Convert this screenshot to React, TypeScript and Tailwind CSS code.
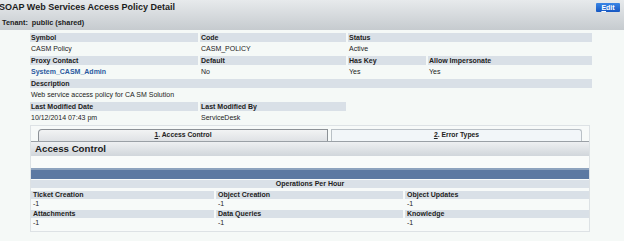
import React, { type FC } from 'react';

type Field = {
  readonly label: string;
  readonly value: string;
  readonly span?: string;
  readonly link?: boolean;
};

const topRows: ReadonlyArray<ReadonlyArray<Field>> = [
  [
    { label: 'Symbol', value: 'CASM Policy' },
    { label: 'Code', value: 'CASM_POLICY' },
    { label: 'Status', value: 'Active', span: 'col-span-2' },
  ],
  [
    { label: 'Proxy Contact', value: 'System_CASM_Admin', link: true },
    { label: 'Default', value: 'No' },
    { label: 'Has Key', value: 'Yes' },
    { label: 'Allow Impersonate', value: 'Yes' },
  ],
  [{ label: 'Description', value: 'Web service access policy for CA SM Solution', span: 'col-span-4' }],
  [
    { label: 'Last Modified Date', value: '10/12/2014 07:43 pm' },
    { label: 'Last Modified By', value: 'ServiceDesk' },
  ],
];

const opsRows: ReadonlyArray<ReadonlyArray<Field>> = [
  [
    { label: 'Ticket Creation', value: '-1' },
    { label: 'Object Creation', value: '-1' },
    { label: 'Object Updates', value: '-1' },
  ],
  [
    { label: 'Attachments', value: '-1' },
    { label: 'Data Queries', value: '-1' },
    { label: 'Knowledge', value: '-1' },
  ],
];

const FieldRow: FC<{ row: ReadonlyArray<Field> }> = ({ row }) => (
  <>
    {row.map((f) => (
      <div key={f.label} className={`${f.span ?? ''} flex flex-col`}>
        <div className="h-[9px] bg-[#d9e0e7] pl-[1px] text-[7px] font-bold leading-[9px] text-[#222]">
          {f.label}
        </div>
        <div
          className={`flex h-[14px] items-center pl-[1px] text-[7px] ${
            f.link ? 'font-bold text-[#2a5aa0]' : 'text-[#222]'
          }`}
        >
          {f.value}
        </div>
      </div>
    ))}
  </>
);

const App: FC = () => {
  return (
    <div className="h-[241px] w-[624px] overflow-hidden bg-[#f5f9f7] font-['Liberation_Sans',Arial,sans-serif] text-[#222]">
      <header className="relative h-[30px] bg-gradient-to-b from-[#e7eaec] to-[#c6cbcf]">
        <h1 className="-ml-[1px] pt-[2px] text-[9px] font-bold leading-[10px] text-[#1c1c1c]">
          SOAP Web Services Access Policy Detail
        </h1>
        <div className="mt-[6px] pl-[2px] text-[7.3px] font-bold leading-[9px] text-[#1c1c1c]">
          Tenant:&nbsp; public (shared)
        </div>
        <button
          type="button"
          className="absolute right-[4px] top-[3px] h-[9px] w-[24px] rounded-[1px] bg-gradient-to-b from-[#3a86e6] to-[#1657c2] text-[7px] font-bold leading-[9px] text-white"
        >
          <span className="underline">E</span>dit
        </button>
      </header>

      <div className="ml-[30px] mt-[3px] grid w-[562px] grid-cols-[168px_146px_78px_164px] gap-x-[2px]">
        {topRows.map((row, i) => (
          <FieldRow key={i} row={row} />
        ))}
      </div>

      <section className="ml-[30px] mt-[0px] w-[560px] border border-[#dde2e5] bg-[#f7faf9]">
        <div className="flex h-[15px] items-end gap-[3px] pl-[7px] pr-[7px] pt-[3px]">
          <div className="flex h-[12px] w-[290px] items-center justify-center rounded-tl-[4px] border-l border-r border-t border-[#8c9196] bg-gradient-to-b from-[#f2f3f4] to-[#dfe2e5] text-[6.8px] font-bold text-[#222]">
            <span className="underline">1</span>. Access Control
          </div>
          <div className="flex h-[12px] flex-1 items-center justify-center rounded-tr-[3px] border-l border-r border-t border-[#b9c0c6] bg-[#f2f6f9] text-[6.8px] font-bold text-[#222]">
            <span className="underline">2</span>. Error Types
          </div>
        </div>
        <div className="h-[1px] bg-[#9aa0a6]" />
        <div className="flex h-[14px] items-center bg-gradient-to-b from-[#eef0f2] to-[#d1d6db] pl-[4px] text-[9.7px] font-bold text-[#1c1c1c]">
          Access Control
        </div>
        <div className="h-[12px] bg-[#f9fbfa]" />
        <div className="h-[11px] border-t-2 border-[#8ea3be] bg-[#5c79a2]" />
        <div className="mt-[1px] h-[8px] bg-[#dae1e8] text-center text-[7px] font-bold leading-[8px]">
          Operations Per Hour
        </div>
        <div className="mt-[3px] grid grid-cols-[183px_187px_1fr] gap-x-[2px]">
          {opsRows.map((row, i) => (
            <React.Fragment key={i}>
              {row.map((f) => (
                <div key={f.label} className="flex flex-col">
                  <div className="h-[8px] bg-[#d9e0e7] pl-[2px] text-[7px] font-bold leading-[8px]">
                    {f.label}
                  </div>
                  <div className="flex h-[11px] items-center pl-[2px] text-[7px]">{f.value}</div>
                </div>
              ))}
            </React.Fragment>
          ))}
        </div>
        <div className="h-[2px]" />
      </section>
    </div>
  );
};

export default App;
